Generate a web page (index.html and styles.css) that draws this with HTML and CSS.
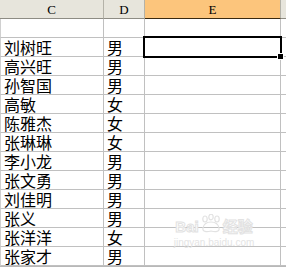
FILE: index.html
```html
<!DOCTYPE html>
<html>
<head>
<meta charset="utf-8">
<link rel="stylesheet" href="styles.css">
</head>
<body>
<div class="sheet">
  <div class="grid">
    <div class="hd c">C</div>
    <div class="hd d">D</div>
    <div class="hd e sel">E</div>
    <div class="hd f"></div>

    <div class="cell c"></div><div class="cell d"></div><div class="cell e"></div><div class="cell f"></div>

    <div class="cell c">刘树旺</div><div class="cell d">男</div><div class="cell e active"><span class="box"></span><span class="handle"></span></div><div class="cell f"></div>
    <div class="cell c">高兴旺</div><div class="cell d">男</div><div class="cell e"></div><div class="cell f"></div>
    <div class="cell c">孙智国</div><div class="cell d">男</div><div class="cell e"></div><div class="cell f"></div>
    <div class="cell c">高敏</div><div class="cell d">女</div><div class="cell e"></div><div class="cell f"></div>
    <div class="cell c">陈雅杰</div><div class="cell d">女</div><div class="cell e"></div><div class="cell f"></div>
    <div class="cell c">张琳琳</div><div class="cell d">女</div><div class="cell e"></div><div class="cell f"></div>
    <div class="cell c">李小龙</div><div class="cell d">男</div><div class="cell e"></div><div class="cell f"></div>
    <div class="cell c">张文勇</div><div class="cell d">男</div><div class="cell e"></div><div class="cell f"></div>
    <div class="cell c">刘佳明</div><div class="cell d">男</div><div class="cell e"></div><div class="cell f"></div>
    <div class="cell c">张义</div><div class="cell d">男</div><div class="cell e"></div><div class="cell f"></div>
    <div class="cell c">张洋洋</div><div class="cell d">女</div><div class="cell e"></div><div class="cell f"></div>
    <div class="cell c">张家才</div><div class="cell d">男</div><div class="cell e"></div><div class="cell f"></div>
  </div>
  <div class="bottombar"></div>

  <div class="watermark">
    <div class="wm-top">
      <span class="wm-bai">Bai</span>
      <svg class="paw" width="22" height="20" viewBox="0 0 22 20">
        <g fill="none" stroke="#e2e2e2" stroke-width="1.2">
          <ellipse cx="5" cy="5" rx="2.2" ry="3"/>
          <ellipse cx="11" cy="3" rx="2.2" ry="2.8"/>
          <ellipse cx="17" cy="5" rx="2.2" ry="3"/>
          <path d="M3 14 C4 9 8 8 11 8 C14 8 18 9 19 14 C20 18 15 18 11 17 C7 18 2 18 3 14 Z"/>
        </g>
      </svg>
      <span class="wm-jy">经验</span>
    </div>
    <div class="wm-url">jingyan.baidu.com</div>
  </div>
</div>
</body>
</html>
```

FILE: styles.css
```css
html, body {
  margin: 0;
  padding: 0;
  background: #ffffff;
}
body {
  width: 286px;
  height: 267px;
  overflow: hidden;
}
.sheet {
  position: relative;
  width: 286px;
  height: 267px;
  overflow: hidden;
}
.grid {
  display: grid;
  grid-template-columns: 104px 41px 136px 20px;
  grid-template-rows: 19px repeat(13, 19px);
}
.hd {
  box-sizing: border-box;
  background: #e7e5dc;
  border-right: 1px solid #b4b2a8;
  border-bottom: 1px solid #8e8c84;
  font-family: "Liberation Serif", serif;
  font-size: 13px;
  color: #000;
  display: flex;
  align-items: center;
  justify-content: center;
  padding-top: 1px;
}
.hd.sel {
  background: #fcc57c;
  border-bottom-color: #3a2a10;
}
.cell {
  box-sizing: border-box;
  border-right: 1px solid #c0c0c0;
  border-bottom: 1px solid #c0c0c0;
  font-family: "Noto Sans CJK SC", sans-serif;
  font-size: 16px;
  line-height: 17px;
  color: #000;
  padding-left: 3px;
  padding-top: 1px;
  white-space: nowrap;
  overflow: visible;
}
.cell.c {
  border-left: 1px solid #d0d0d0;
}
.cell.active {
  position: relative;
}
.box {
  position: absolute;
  left: -2px;
  top: -2px;
  right: -2px;
  bottom: -2px;
  border: 2px solid #000;
  z-index: 2;
}
.handle {
  position: absolute;
  right: -4px;
  bottom: -4px;
  width: 5px;
  height: 5px;
  background: #000;
  border: 1px solid #fff;
  z-index: 3;
}
.bottombar {
  height: 3px;
  background: #b8b8b8;
}
.watermark {
  position: absolute;
  left: 166px;
  top: 214px;
  width: 96px;
  display: flex;
  flex-direction: column;
  align-items: center;
  pointer-events: none;
}
.wm-top {
  display: flex;
  align-items: flex-end;
  gap: 1px;
}
.wm-bai {
  font-family: "Liberation Sans", sans-serif;
  font-weight: bold;
  font-size: 15px;
  line-height: 15px;
  color: #fff;
  -webkit-text-stroke: 1px #e2e2e2;
}
.wm-jy {
  font-family: "Noto Sans CJK SC", sans-serif;
  font-weight: bold;
  font-size: 15px;
  line-height: 16px;
  color: #fff;
  -webkit-text-stroke: 1px #e2e2e2;
}
.paw {
  display: block;
}
.wm-url {
  font-family: "Liberation Sans", sans-serif;
  font-size: 10px;
  line-height: 11px;
  color: #e4e4e4;
  margin-top: 3px;
}
```
